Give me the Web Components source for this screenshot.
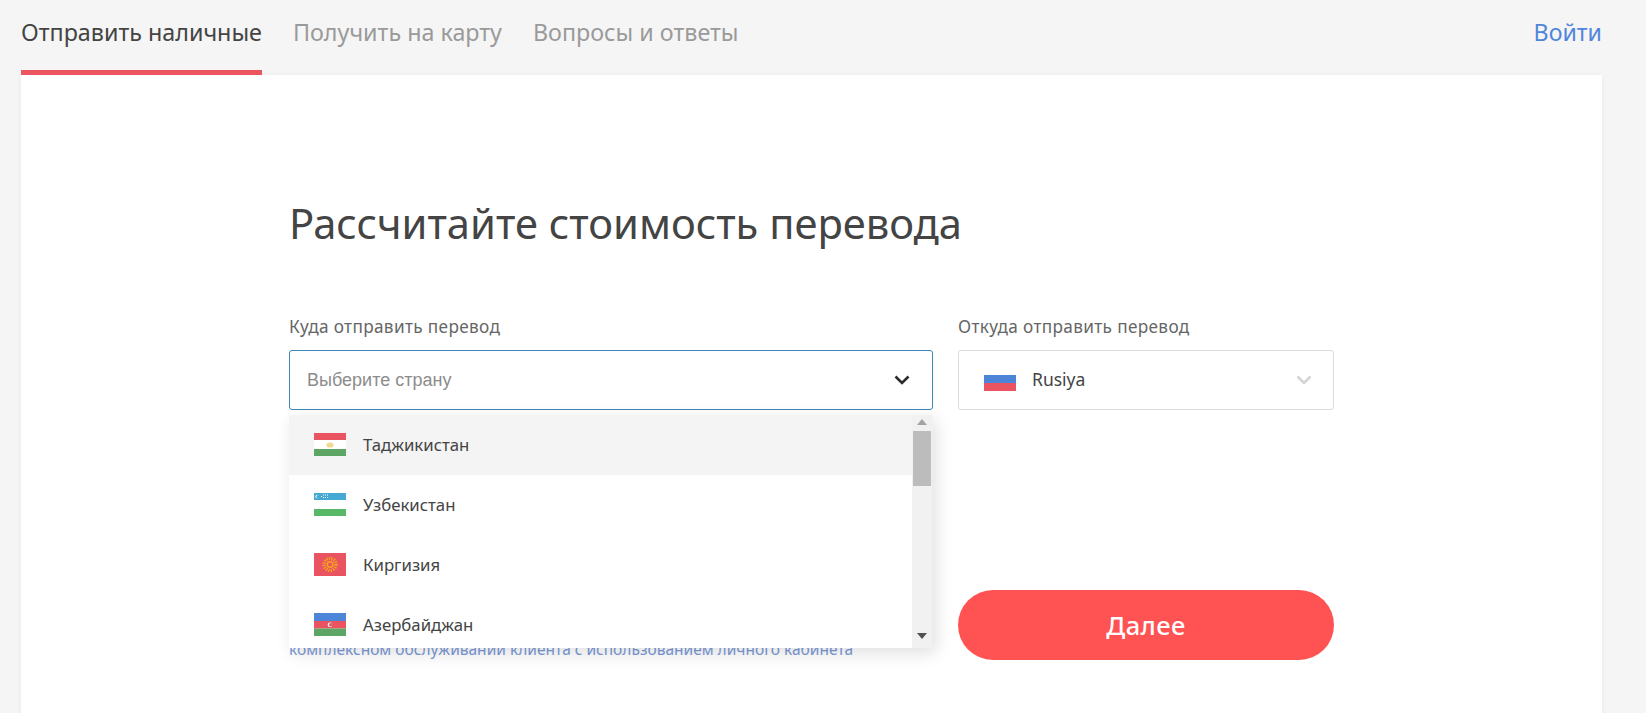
<!DOCTYPE html>
<html lang="ru"><head><meta charset="utf-8"><title>Перевод</title>
<style>
html,body{margin:0;padding:0;height:100%;overflow:hidden;background:#f5f5f5}
body{font-family:"Noto Sans","Open Sans",sans-serif;color:#444}
</style></head><body>
<transfer-page></transfer-page>
<script>
function el(name, css, html){
  customElements.define(name, class extends HTMLElement{
    connectedCallback(){
      if(this.shadowRoot) return;
      this.attachShadow({mode:'open'}).innerHTML='<style>'+css+'</style>'+(typeof html==='function'?html(this):html);
    }
  });
}
const FLAGS={
 tj:'<rect width="32" height="7" fill="#ea5461"/><rect y="7" width="32" height="9" fill="#fff"/><rect y="16" width="32" height="7" fill="#5da565"/><ellipse cx="16" cy="12" rx="3.6" ry="2.6" fill="#f2d990"/>',
 uz:'<rect width="32" height="7" fill="#45a9d4"/><rect y="7" width="32" height="9" fill="#fff"/><rect y="16" width="32" height="7" fill="#58b868"/><circle cx="3.2" cy="3.5" r="1.8" fill="#fff"/><circle cx="3.9" cy="3.5" r="1.5" fill="#45a9d4"/><g fill="#fff"><rect x="7" y="3" width="1" height="1"/><rect x="9" y="1.5" width="1" height="1"/><rect x="11" y="1.5" width="1" height="1"/><rect x="9" y="4" width="1" height="1"/><rect x="11" y="4" width="1" height="1"/><rect x="13" y="1.5" width="1" height="1"/><rect x="13" y="4" width="1" height="1"/></g>',
 kg:'<rect width="32" height="23" fill="#ea5461"/><circle cx="16" cy="11.5" r="6" fill="none" stroke="#f6a21e" stroke-width="3.2" stroke-dasharray="1.3 1.1"/><circle cx="16" cy="11.5" r="3.6" fill="#f6a21e"/><circle cx="16" cy="11.5" r="2" fill="#ea5461"/>',
 az:'<rect width="32" height="8" fill="#4d86d8"/><rect y="8" width="32" height="7.5" fill="#ea5461"/><rect y="15.5" width="32" height="7.5" fill="#5da565"/><circle cx="16" cy="11.7" r="2.3" fill="#fff"/><circle cx="16.7" cy="11.7" r="1.7" fill="#ea5461"/>',
 ru:'<rect width="32" height="7" y="0" fill="#fff"/><rect y="7" width="32" height="8" fill="#4d86d8"/><rect y="15" width="32" height="8" fill="#ea5461"/>'
};
el('flag-icon',':host{display:block;width:32px;height:23px;flex:none}svg{display:block}',
  h=>`<svg width="32" height="23" viewBox="0 0 32 23">${FLAGS[h.getAttribute('code')]}</svg>`);
el('chevron-icon',':host{display:block;width:16px;height:10px;flex:none}svg{display:block}',
  h=>`<svg width="16" height="10" viewBox="0 0 16 10"><path d="M1.5 1.5 8 8l6.5-6.5" fill="none" stroke="${h.getAttribute('color')||'#2b2b2b'}" stroke-width="2.6"/></svg>`);
el('nav-tab',`:host{display:block;height:75px;box-sizing:border-box;padding-top:14px;font-size:23.3px;line-height:36px;color:#9a9a9a;white-space:nowrap}
:host([active]){color:#444;border-bottom:5px solid #ea5560}`,'<slot></slot>');
el('top-nav',`:host{display:flex;height:75px;padding:0 44px 0 21px;justify-content:space-between}
.tabs{display:flex;gap:31px}
.login{padding-top:14px;font-size:23.2px;line-height:36px;color:#4f86dc}`,
`<div class="tabs"><slot></slot></div><div class="login">Войти</div>`);
el('field-label',`:host{display:block;font-size:17.2px;line-height:24px;color:#666;letter-spacing:.35px;padding-top:1px;margin-bottom:11px;white-space:nowrap}`,'<slot></slot>');
el('select-box',`:host{display:flex;align-items:center;box-sizing:border-box;height:60px;background:#fff;border:1px solid #dcdcdc;border-radius:3px;font-size:17.5px;color:#444;padding:0 21px 2px 25px;gap:16px}
:host([open]){border-color:#3c87b5;padding:0 22px 2px 17px}
.v{flex:1;min-width:0}
chevron-icon{position:relative;top:1px}
::slotted(flag-icon){display:block}`,
h=>`<slot name="flag"></slot><div class="v"><slot></slot></div><chevron-icon color="${h.hasAttribute('open')?'#2b2b2b':'#d4d4d4'}"></chevron-icon>`);
el('placeholder-text',`:host{font:18px "Liberation Sans",Arial,sans-serif;color:#8c8c8c}`,'<slot></slot>');
el('country-item',`:host{display:flex;align-items:center;height:60px;box-sizing:border-box;padding:0 0 2px 25px;flex:none;gap:17px;font-size:16.8px;color:#444;background:#fff}
:host([hl]){background:#f4f4f4}`,
h=>`<flag-icon code="${h.getAttribute('code')}"></flag-icon><slot></slot>`);
el('fake-scrollbar',`:host{display:block;width:20px;flex:none;background:#f1f1f1;position:relative}
.thumb{position:absolute;left:1px;right:1px;top:16px;height:55px;background:#bcbcbc}
.u,.d{position:absolute;left:5px;width:0;height:0;border-left:5px solid transparent;border-right:5px solid transparent}
.u{top:4px;border-bottom:6px solid #a3a3a3}.d{bottom:9px;border-top:6px solid #505050}`,
`<div class="u"></div><div class="thumb"></div><div class="d"></div>`);
el('country-list',`:host{position:absolute;z-index:5;left:0;top:101px;width:643px;height:233px;display:flex;background:#fff;box-shadow:4px 5px 16px rgba(0,0,0,.13);overflow:hidden}
.items{flex:1;display:flex;flex-direction:column;overflow:hidden;min-width:0}`,
`<div class="items"><slot></slot></div><fake-scrollbar></fake-scrollbar>`);
el('red-button',`:host{display:flex;align-items:center;justify-content:center;height:70px;background:#ff5353;border-radius:35px;color:#fff;font-size:25.5px;font-weight:500;letter-spacing:.4px}`,'<slot></slot>');
el('transfer-card',`:host{display:block;margin:0 44px 0 21px;height:660px;background:#fff;box-shadow:0 1px 5px rgba(0,0,0,.06);box-sizing:border-box;padding:118px 268px 0 268px;font-family:inherit}
h1{margin:0 0 61px;font-weight:400;font-size:41.7px;line-height:60px;color:#444;white-space:nowrap}
.row{display:grid;grid-template-columns:644px 376px;column-gap:25px;align-items:start}
.col{position:relative}
.bottom{display:grid;grid-template-columns:644px 376px;column-gap:25px;margin-top:180px}
.info{color:#7b9ad9;font-size:15.5px;line-height:22px;padding-top:48px;white-space:nowrap}`,
`<h1>Рассчитайте стоимость перевода</h1>
<div class="row">
 <div class="col"><field-label>Куда отправить перевод</field-label>
  <select-box open><placeholder-text>Выберите страну</placeholder-text></select-box>
  <country-list>
   <country-item code="tj" hl>Таджикистан</country-item>
   <country-item code="uz">Узбекистан</country-item>
   <country-item code="kg">Киргизия</country-item>
   <country-item code="az">Азербайджан</country-item>
  </country-list></div>
 <div class="col"><field-label>Откуда отправить перевод</field-label>
  <select-box><flag-icon slot="flag" code="ru"></flag-icon>Rusiya</select-box></div>
</div>
<div class="bottom"><div class="info">комплексном обслуживании клиента с использованием личного кабинета</div>
<red-button>Далее</red-button></div>`);
el('transfer-page',`:host{display:block;height:713px;overflow:hidden}`,
`<top-nav><nav-tab active>Отправить наличные</nav-tab><nav-tab>Получить на карту</nav-tab><nav-tab>Вопросы и ответы</nav-tab></top-nav><transfer-card></transfer-card>`);
</script>
</body></html>
